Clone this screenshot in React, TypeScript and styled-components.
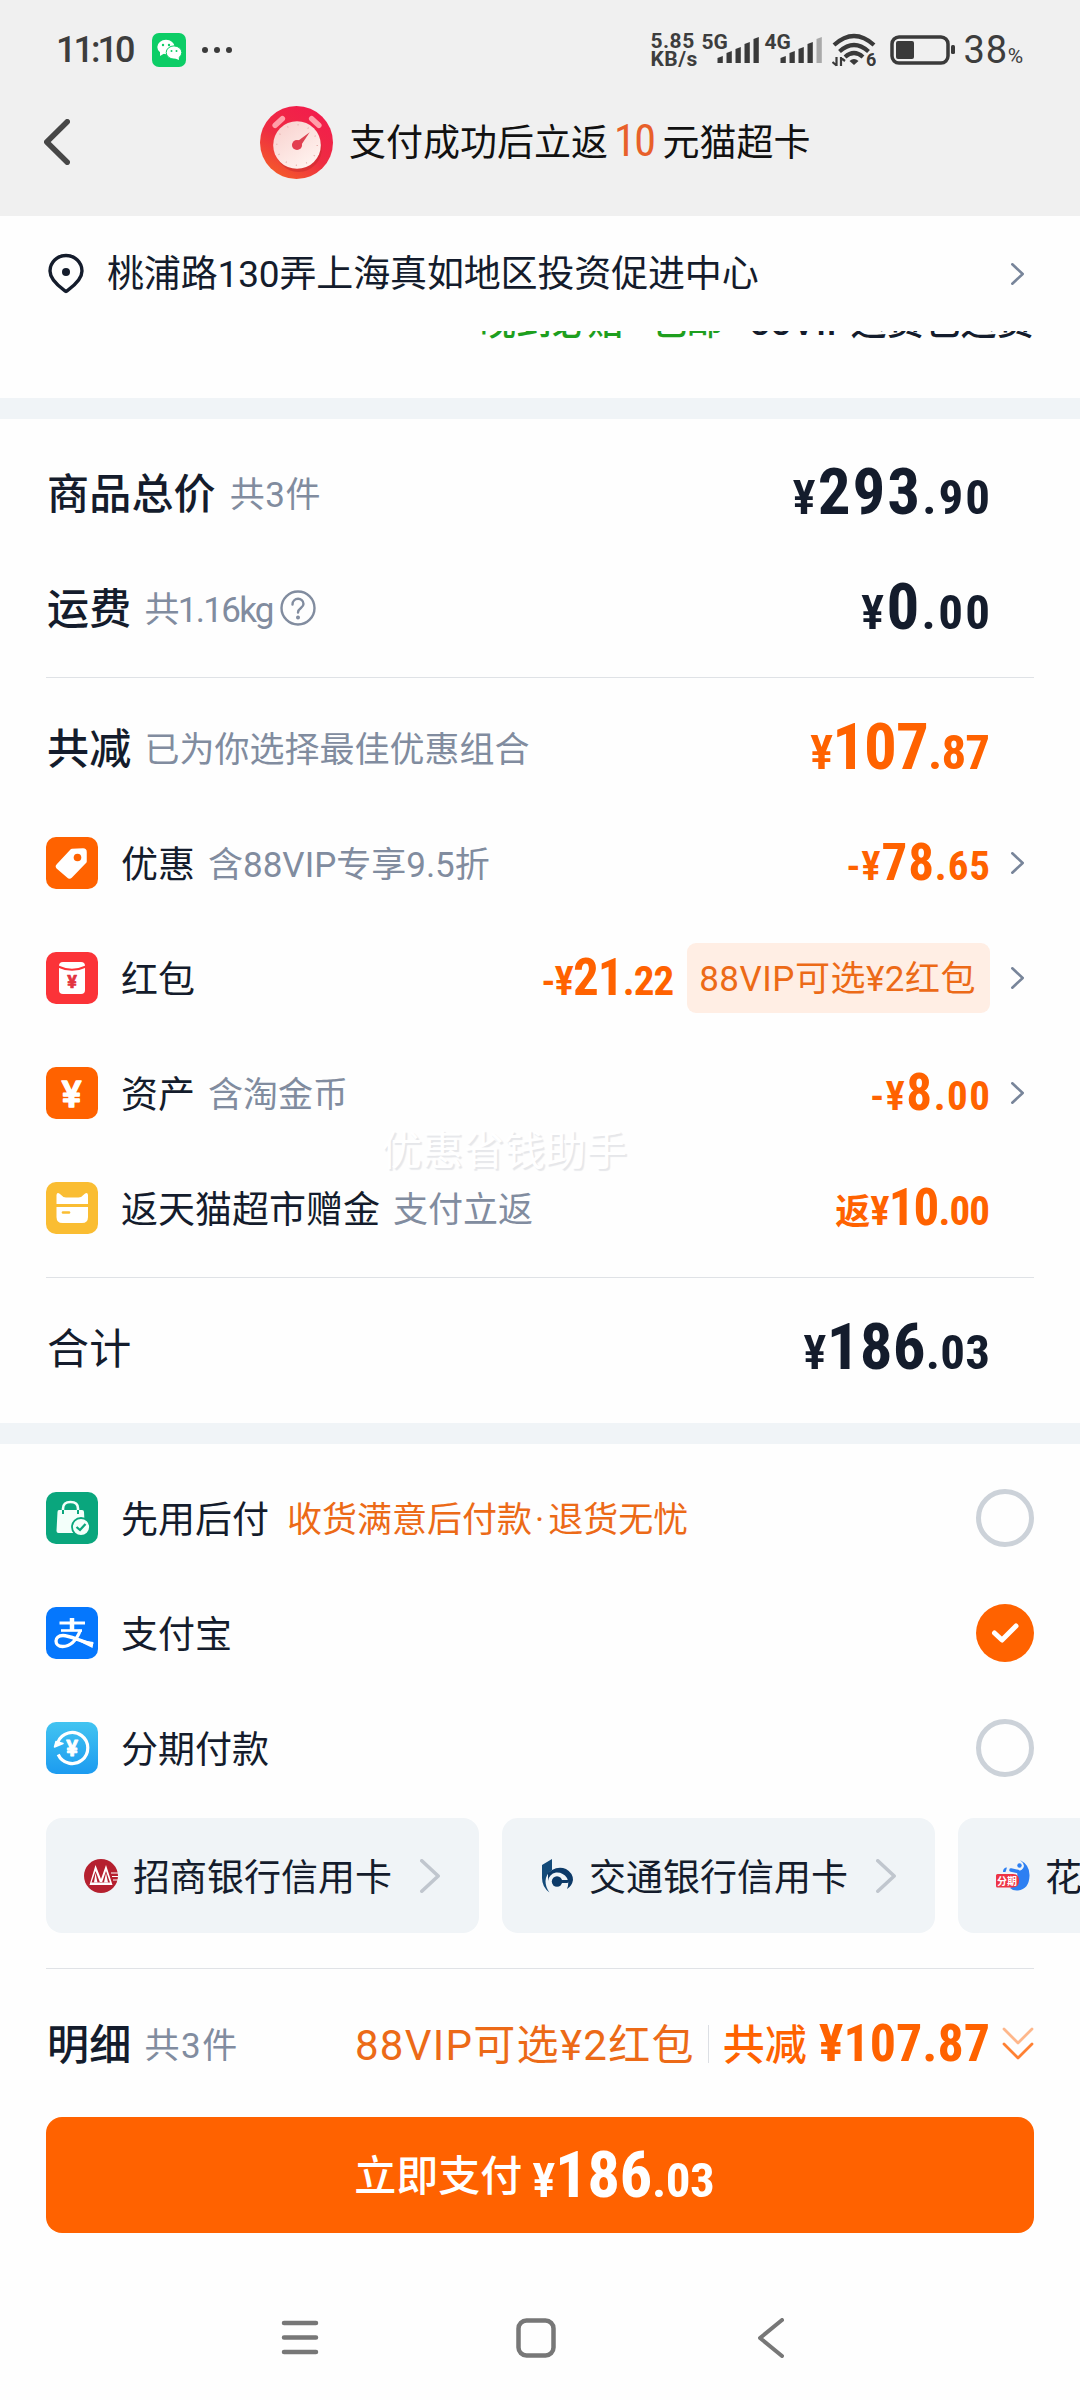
import React from "react";
import styled, { createGlobalStyle } from "styled-components";

const ORANGE = "#ff6200";
const INK = "#141c2c";
const MUTED = "#818c9f";

const GlobalStyle = createGlobalStyle`
  * { box-sizing: border-box; }
  body {
    margin: 0;
    background: #fefefe;
    font-family: Roboto, "Noto Sans CJK SC", sans-serif;
    color: ${INK};
  }
`;

const Page = styled.div`
  width: 1080px;
  height: 2400px;
  overflow: hidden;
  display: flex;
  flex-direction: column;
  background: #fefefe;
  line-height: 1;
  white-space: nowrap;
`;

/* ---------- status bar and header ---------- */

const Top = styled.header`
  height: 216px;
  background: #f0f0f0;
  display: flex;
  flex-direction: column;
`;

const StatusBar = styled.div`
  height: 100px;
  padding: 0 56px 0 56px;
  display: flex;
  align-items: center;
  justify-content: space-between;
  color: #3d3d3d;
`;

const StatusGroup = styled.div`
  display: flex;
  align-items: center;
`;

const Time = styled.span`
  width: 96px;
  font-size: 36px;
  letter-spacing: -3px;
  font-weight: 500;
  font-stretch: 88%;
`;

const Speed = styled.span`
  width: 51px;
  font-size: 21px;
  line-height: 18px;
  letter-spacing: 0.5px;
  font-weight: 700;
  white-space: pre-line;
`;

const Network = styled.div<{ $width: number }>`
  width: ${(p) => p.$width}px;
  height: 34px;
  display: flex;
  align-items: flex-start;
  font-size: 21px;
  line-height: 18px;
  font-weight: 700;
`;

const Bars = styled.svg`
  flex: none;
  margin: 4px 0 0 -11px;
`;

const Percent = styled.span`
  font-size: 38px;
  margin-left: 7px;
  letter-spacing: 0.8px;
  small { font-size: 21px; }
`;

const TitleBar = styled.div`
  height: 84px;
  padding-left: 44px;
  display: flex;
  align-items: center;
`;

const Title = styled.h1`
  margin: 0 0 2px 16px;
  font-size: 37px;
  font-weight: 400;
  color: #111;
  display: flex;
  align-items: baseline;
  em {
    font-style: normal;
    font-size: 44px;
    font-stretch: 75%;
    color: #e8602a;
    margin: 0 8px 0 6px;
    letter-spacing: -1.5px;
  }
`;

const StopwatchIcon = styled.svg`
  margin-left: 190px;
`;

/* ---------- address ---------- */

const AddressRow = styled.div`
  height: 115px;
  padding: 0 56px 0 46px;
  display: flex;
  align-items: center;
`;

const Address = styled.span`
  flex: 1;
  margin-left: 21px;
  padding-top: 2px;
  font-size: 37px;
  letter-spacing: -0.15px;
`;

const ScrolledLine = styled.div`
  height: 67px;
  padding-right: 46px;
  display: flex;
  justify-content: flex-end;
`;

const ScrolledText = styled.div`
  height: 8px;
  overflow: hidden;
  display: flex;
  align-items: flex-end;
  gap: 27px;
  font-size: 36px;
  font-weight: 500;
  line-height: 31px;
  span:nth-child(-n + 2) { color: #1e9f1e; }
  span:last-child { letter-spacing: 0.7px; }
`;

const Band = styled.div`
  height: 21px;
  background: #f0f4f7;
`;

/* ---------- rows ---------- */

const Section = styled.section<{ $top: number; $bottom: number }>`
  padding: ${(p) => p.$top}px 46px ${(p) => p.$bottom}px;
`;

const Row = styled.div`
  height: 115px;
  display: flex;
  align-items: center;
`;

const Divider = styled.hr`
  margin: 12px 0;
  height: 1px;
  border: 0;
  background: #dfe2e6;
`;

const Heading = styled.span<{ $weight?: number }>`
  font-size: 42px;
  letter-spacing: 0.2px;
  font-weight: ${(p) => p.$weight ?? 500};
  margin-left: 1px;
  padding-top: 4px;
`;

const Label = styled.span`
  font-size: 37px;
  margin-left: 23px;
  padding-top: 5px;
`;

const Note = styled.span<{ $gap?: number; $color?: string; $track?: number }>`
  font-size: 35px;
  margin-left: ${(p) => p.$gap ?? 13}px;
  padding-top: 5px;
  letter-spacing: ${(p) => p.$track ?? 0}px;
  color: ${(p) => p.$color ?? MUTED};
`;

const MidDot = styled.span`
  margin: 0 4px 0 3px;
`;

const Trailing = styled.div`
  margin-left: auto;
  display: flex;
  align-items: center;
`;

const ArrowSlot = styled.div<{ $flush?: boolean }>`
  width: 44px;
  display: flex;
  justify-content: flex-end;
  padding-right: ${(p) => (p.$flush ? 0 : 10)}px;
`;

const Amount = styled.span<{ $size: number; $minor: number; $color: string; $track: number }>`
  color: ${(p) => p.$color};
  font-size: ${(p) => p.$size}px;
  font-weight: 700;
  font-stretch: 85%;
  letter-spacing: ${(p) => p.$track}px;
  margin-right: ${(p) => -p.$track}px;
  small { font-size: ${(p) => p.$minor}px; }
  small:first-child { font-weight: 600; }
`;

const Back = styled.small`
  && { font-size: 35px; font-weight: 500; letter-spacing: 0; vertical-align: 1px; }
`;

const Pill = styled.span`
  height: 70px;
  padding: 3px 14px 0 12px;
  margin-left: 13px;
  border-radius: 9px;
  background: #ffeee4;
  color: #ec6a17;
  font-size: 35px;
  letter-spacing: 0.5px;
  display: flex;
  align-items: center;
`;

const Radio = styled.span<{ $on?: boolean }>`
  width: 58px;
  height: 58px;
  border-radius: 50%;
  border: ${(p) => (p.$on ? "0" : "5.5px solid #ccd2d9")};
  background: ${(p) => (p.$on ? ORANGE : "transparent")};
  display: flex;
  align-items: center;
  justify-content: center;
`;

const Watermark = styled.div`
  position: absolute;
  left: 381px;
  top: 1131px;
  font-size: 41px;
  color: #fff;
  text-shadow: 2px 2px 1px #e6e7ea;
`;

/* ---------- bank cards ---------- */

const Chips = styled.div`
  display: flex;
  gap: 23px;
  padding-left: 46px;
  overflow: hidden;
`;

const Chip = styled.div`
  flex: none;
  width: 433px;
  height: 115px;
  padding: 0 39px 0 38px;
  border-radius: 16px;
  background: #f0f4f7;
  display: flex;
  align-items: center;
  font-size: 37px;
  gap: 15px;
  & > svg:last-child { margin-left: auto; }
`;

const BankName = styled.span`
  padding-top: 6px;
`;

/* ---------- footer ---------- */

const Summary = styled.div`
  height: 121px;
  padding-top: 4px;
  display: flex;
  align-items: center;
`;

const Offer = styled.span`
  color: #ec6a17;
  font-size: 42px;
  letter-spacing: 1.3px;
  padding-top: 4px;
`;

const Bar = styled.i`
  width: 1px;
  height: 38px;
  margin: 0 14px 0 13px;
  background: #dcdfe4;
`;

const Saved = styled.span`
  color: ${ORANGE};
  font-size: 42px;
  font-weight: 500;
  margin-right: 12px;
  padding-top: 4px;
`;

const PayButton = styled.button`
  width: 988px;
  height: 116px;
  margin: 15px 46px 0;
  padding: 0 11px 0 0;
  border: 0;
  border-radius: 16px;
  background: ${ORANGE};
  color: #fff;
  font: 500 42px/1 Roboto, "Noto Sans CJK SC", sans-serif;
  display: flex;
  align-items: center;
  justify-content: center;
  gap: 10px;
`;

const PayLabel = styled.span`
  padding-top: 4px;
`;

const NavBar = styled.nav`
  margin-top: 72px;
  height: 66px;
  padding: 0 296px 0 281px;
  display: flex;
  align-items: center;
  justify-content: space-between;
`;

const HomeKey = styled.svg`
  margin-right: 5px;
`;

/* ---------- icons ---------- */

type ChevronProps = { w: number; h: number; color: string; stroke: number; left?: boolean };

function Chevron({ w, h, color, stroke, left }: ChevronProps) {
  const p = stroke / 2;
  const d = left
    ? `M${w - p} ${p}L${p} ${h / 2}L${w - p} ${h - p}`
    : `M${p} ${p}L${w - p} ${h / 2}L${p} ${h - p}`;
  return (
    <svg width={w} height={h} fill="none" stroke={color} strokeWidth={stroke} strokeLinecap="round" strokeLinejoin="round">
      <path d={d} />
    </svg>
  );
}

const Yen = ({ x, y, size, color, weight = 700 }: { x: number; y: number; size: number; color: string; weight?: number }) => (
  <text x={x} y={y} fontSize={size} fontWeight={weight} fill={color} stroke={color} strokeWidth={size / 26} strokeLinejoin="round" textAnchor="middle" fontFamily="Roboto, sans-serif">
    ¥
  </text>
);

function Tile({ color, children }: { color: string; children: React.ReactNode }) {
  return (
    <svg width="52" height="52" viewBox="0 0 52 52">
      <rect width="52" height="52" rx="10" fill={color} />
      {children}
    </svg>
  );
}

const TagIcon = () => (
  <Tile color={ORANGE}>
    <path d="M26 13.5L37 13Q39 13 39 15V24.5L24.5 39.5Q23.5 40.5 22.5 39.500L12 30.500Q11 29.500 12 28.500Z" fill="#fff" stroke="#fff" strokeWidth="3.500" strokeLinejoin="round" />
    <circle cx="31.5" cy="20.500" r="3.800" fill={ORANGE} />
  </Tile>
);

const EnvelopeIcon = () => (
  <Tile color="#fb3338">
    <rect x="13" y="10" width="26" height="32" rx="4" fill="#fff" />
    <path d="M12 14.500Q26 21 40 14.500" fill="none" stroke="#fb3338" strokeWidth="2" />
    <Yen x={26} y={36} size={18} color="#e23440" />
  </Tile>
);

const AssetIcon = () => (
  <Tile color={ORANGE}>
    <Yen x={25.5} y={39.5} size={37} color="#fff" weight={500} />
  </Tile>
);

const CatCardIcon = () => (
  <Tile color="#fabd32">
    <path d="M10.500 22V13Q11 9.500 14 12Q17 15.500 20 15.500H32.500Q35.500 15.500 38.500 12Q41.500 9.500 42 13V22Z" fill="#fff" />
    <path d="M10.500 25H42V35Q42 41 36 41H16.500Q10.500 41 10.500 35Z" fill="#fff" />
    <path d="M17 30.500H23" stroke="#fabd32" strokeWidth="2.600" strokeLinecap="round" />
  </Tile>
);

const BagIcon = () => (
  <Tile color="#0aa67d">
    <path d="M13 18H36Q38 18 38 20L39 39Q39 41 37 41H12.500Q10.500 41 10.500 39L11.500 20Q11.500 18 13 18Z" fill="#f3fffa" />
    <path d="M17 18V16.500Q17 10 24.500 10T32 16.500V18" fill="none" stroke="#f3fffa" strokeWidth="2.600" />
    <path d="M17 18V22M32 18V22" stroke="#0aa67d" strokeWidth="2" />
    <circle cx="35" cy="35" r="9" fill="#f3fffa" stroke="#0aa67d" strokeWidth="1.800" />
    <path d="M30.500 35L34 38L39.500 32" fill="none" stroke="#0aa67d" strokeWidth="2.300" />
  </Tile>
);

const AlipayIcon = () => (
  <Tile color="#0577fd">
    <g fill="none" stroke="#fff">
      <path d="M13.500 16H39" strokeWidth="3" />
      <path d="M26 11V23" strokeWidth="4.500" />
      <path d="M15 23.500H36" strokeWidth="2.600" />
      <path d="M34.500 23C31 32 25 39.500 16.500 39.500C8 39.500 7.500 28.500 17 28.500C24 28.500 31 33 47 37.500" strokeWidth="3.300" />
    </g>
    <path d="M32 31.500Q39 34 47.500 35L46.500 41Q38 37 31 33Z" fill="#fff" />
  </Tile>
);

const InstallmentIcon = () => (
  <Tile color="url(#sky)">
    <defs>
      <linearGradient id="sky" x1="0" y1="0" x2="0" y2="1">
        <stop offset="0" stopColor="#42c4f1" />
        <stop offset="1" stopColor="#1c9bf0" />
      </linearGradient>
    </defs>
    <path d="M12 20A15.500 15.500 0 1 1 12.200 32.500" fill="none" stroke="#fff" strokeWidth="3.200" />
    <path d="M8.500 25L10 19.500L17 21.500Z" fill="#fff" stroke="#fff" strokeWidth="1.500" strokeLinejoin="round" />
    <Yen x={26} y={34} size={22} color="#fff" weight={600} />
  </Tile>
);

const PinIcon = () => (
  <svg width="40" height="42" viewBox="0 0 40 42" fill="none">
    <path d="M20 38.500C17 36 4 28.500 4 18A16 15.500 0 0 1 36 18C36 28.500 23 36 20 38.500Z" stroke={INK} strokeWidth="3.400" strokeLinejoin="round" />
    <circle cx="20" cy="19" r="4" fill={INK} />
  </svg>
);

const Help = styled.svg`
  margin: 0 0 0 7px;
`;

const WechatIcon = () => (
  <svg width="34" height="34" viewBox="0 0 34 34">
    <rect width="34" height="34" rx="7" fill="#0ccd66" />
    <path d="M8 18L8 23L13 20Z" fill="#fff" />
    <ellipse cx="14" cy="14" rx="8.700" ry="7.200" fill="#fff" />
    <ellipse cx="22" cy="19.500" rx="7.800" ry="6.600" fill="#fff" stroke="#0ccd66" strokeWidth="1" />
    <path d="M22 25L27 27L26.500 22Z" fill="#fff" />
    <g fill="#0ccd66">
      <circle cx="11" cy="12" r="1.200" />
      <circle cx="17" cy="12" r="1.200" />
      <circle cx="19.500" cy="18" r="1" />
      <circle cx="24.500" cy="18" r="1" />
    </g>
  </svg>
);

const barHeights = [7, 12, 16, 21, 26];

const Signal = ({ weak }: { weak?: boolean }) => (
  <Bars width="43" height="26">
    {barHeights.map((h, i) => (
      <path key={h} d={`M${i * 9 + 0.5} 26V${28 - h}L${i * 9 + 5.8} ${26 - h}V26Z`} fill={weak && i === 4 ? "#a9a9a9" : "#3a3a3a"} />
    ))}
  </Bars>
);

const WifiIcon = () => (
  <svg width="44" height="34" viewBox="0 0 44 34" fill="none" stroke="#3a3a3a" strokeWidth="4.200">
    <path d="M2 12Q22 -6 42 12" />
    <path d="M7.500 18.500Q22 5.500 36.500 18.500" />
    <path d="M13 24Q22 16 31 24" />
    <path d="M17.500 28Q22 24 26.500 28L22 32Z" fill="#3a3a3a" stroke="none" />
    <path d="M4.500 24V33M0.500 29L4.500 32.500M9 33V24M13 28L9 25" strokeWidth="2.200" />
    <text x="34" y="33" fontSize="18" fontWeight="700" fill="#3a3a3a" stroke="none" fontFamily="Roboto, sans-serif">6</text>
  </svg>
);

const Battery = styled.svg`
  margin-left: 14px;
`;

const CmbLogo = () => (
  <svg width="34" height="34" viewBox="0 0 34 34">
    <circle cx="17" cy="17" r="17" fill="#b5202f" />
    <path d="M11.500 6L17 20L22 6L28.500 26H5.500Z" fill="#fff" />
    <path d="M11.500 12L7.500 23.500H26L22 12L17.800 24H16.200Z" fill="#b5202f" />
    <path d="M11.500 14L13.500 23.500H10Z M22 14L24 23.500H20Z" fill="#fff" />
    <path d="M27 14H34M28 17.500H34M29 21H34" stroke="#fff" strokeWidth="1" />
  </svg>
);

const BocomLogo = () => (
  <svg width="34" height="34" viewBox="0 0 34 34">
    <path d="M2 6L12 0V11Q6 15 5.500 22Q5.500 28 9.500 33.500Q2 28 2 19Z" fill="#134a79" />
    <path d="M12 11Q19 7 26 10Q33 14 33 21Q32 27 27 30Q29.500 24 27 19Q23 13 16 13.500Q9 15 8 22V14Z" fill="#0d3a68" />
    <circle cx="17" cy="22.500" r="5.200" fill="#0d3a68" />
    <path d="M17 21H29Q29 23 27.500 24H17Z" fill="#0d3a68" />
  </svg>
);

const HuabeiLogo = () => (
  <svg width="34" height="34" viewBox="0 0 34 34">
    <path d="M24 1Q34 6 33.500 17Q33 30 22 31.500Q17 32 14 29L22 24L21 12Q27 12 28 7Q27 3 24 1Z" fill="#2d7ff2" />
    <path d="M7 13Q7 8.500 11 8.500L9.500 13Z" fill="#2d7ff2" />
    <path d="M15 11L22 12.500" stroke="#2d7ff2" strokeWidth="3.500" strokeLinecap="round" />
    <circle cx="23.500" cy="6.500" r="2.200" fill="#2d7ff2" />
    <path d="M1.500 15H17Q23 15 23 21.500Q23 28.500 16 28.500H1.500Q0 28.500 0 27V16.500Q0 15 1.500 15Z" fill="#ed3445" />
    <text x="11" y="25.500" fontSize="10" fontWeight="700" textAnchor="middle" fill="#fff" fontFamily="'Noto Sans CJK SC', sans-serif">分期</text>
  </svg>
);

/* ---------- composed rows ---------- */

type PriceProps = { value: string; large?: boolean; color?: string; prefix?: React.ReactNode; track?: number };

function Price({ value, large, color = ORANGE, prefix, track = 0 }: PriceProps) {
  const [whole, cents] = value.split(".");
  return (
    <Amount $size={large ? 65 : 51} $minor={large ? 49 : 41} $color={color} $track={track}>
      <small>{prefix}¥</small>
      {whole}
      <small>.{cents}</small>
    </Amount>
  );
}

type DetailProps = { icon: React.ReactNode; label: string; note?: string; arrow?: boolean; children: React.ReactNode };

const Detail = ({ icon, label, note, arrow, children }: DetailProps) => (
  <Row>
    {icon}
    <Label>{label}</Label>
    {note && <Note>{note}</Note>}
    <Trailing>
      {children}
      <ArrowSlot>{arrow && <Chevron w={13} h={22} color="#78859a" stroke={2.6} />}</ArrowSlot>
    </Trailing>
  </Row>
);

const Check = () => (
  <svg width="30" height="24" viewBox="0 0 30 24" fill="none" stroke="#fff" strokeWidth="5" strokeLinecap="round" strokeLinejoin="round">
    <path d="M4.500 12L12 19L26 5" />
  </svg>
);

export default function App() {
  return (
    <Page>
      <GlobalStyle />
      <Top>
        <StatusBar>
          <StatusGroup>
            <Time>11:10</Time>
            <WechatIcon />
            <svg width="46" height="8">
              {[19, 31, 43].map((x) => <circle key={x} cx={x} cy="4" r="3" fill="#3a3a3a" />)}
            </svg>
          </StatusGroup>
          <StatusGroup>
            <Speed>{"5.85\nKB/s"}</Speed>
            <Network $width={63}>5G<Signal /></Network>
            <Network $width={68}>4G<Signal weak /></Network>
            <WifiIcon />
            <Battery width="66" height="30">
              <rect x="2" y="2" width="56" height="26" rx="7" fill="none" stroke="#3a3a3a" strokeWidth="3.500" />
              <rect x="6" y="6" width="18" height="18" rx="2" fill="#3a3a3a" />
              <rect x="61" y="10" width="4" height="9" rx="1.500" fill="#3a3a3a" />
            </Battery>
            <Percent>38<small>%</small></Percent>
          </StatusGroup>
        </StatusBar>
        <TitleBar>
          <Chevron left w={26} h={46} color="#474747" stroke={5.5} />
          <StopwatchIcon width="73" height="73" viewBox="0 0 72 72">
            <defs>
              <linearGradient id="body" x1="0.800" y1="0" x2="0.200" y2="1">
                <stop offset="0" stopColor="#f31b4d" />
                <stop offset="0.550" stopColor="#ee2c42" />
                <stop offset="1" stopColor="#f55f28" />
              </linearGradient>
              <linearGradient id="face" x1="0" y1="0" x2="0.700" y2="1">
                <stop offset="0" stopColor="#f8cfcc" />
                <stop offset="1" stopColor="#fff3ef" />
              </linearGradient>
            </defs>
            <circle cx="36" cy="36" r="36" fill="url(#body)" />
            <ellipse cx="38" cy="42" rx="23" ry="23" fill="#c52a2c" opacity="0.5" />
            <g stroke="#ff9fa9" strokeWidth="5.500" strokeLinecap="round">
              <path d="M15 19L22 12.500" />
              <path d="M51 12.500L58 19" />
            </g>
            <circle cx="36.500" cy="38.500" r="23.500" fill="url(#face)" />
            <circle cx="36.500" cy="38.500" r="20" fill="none" stroke="#e6b5b0" strokeWidth="1.500" strokeDasharray="1 9.470" />
            <path d="M34 37L49 26L39 41Z" fill="#dc4352" />
            <circle cx="36.500" cy="38.500" r="5" fill="#e33e50" />
          </StopwatchIcon>
          <Title>支付成功后立返<em>10</em>元猫超卡</Title>
        </TitleBar>
      </Top>

      <AddressRow>
        <PinIcon />
        <Address>桃浦路130弄上海真如地区投资促进中心</Address>
        <Chevron w={13} h={22} color="#78859a" stroke={2.6} />
      </AddressRow>
      <ScrolledLine>
        <ScrolledText>
          <span>晚到必赔</span>
          <span>包邮</span>
          <span>88VIP运费包运费</span>
        </ScrolledText>
      </ScrolledLine>
      <Band />

      <Section $top={16} $bottom={18}>
        <Row>
          <Heading>商品总价</Heading>
          <Note $gap={14} $track={0.5}>共3件</Note>
          <Trailing><Price value="293.90" large color={INK} track={2} /><ArrowSlot /></Trailing>
        </Row>
        <Row>
          <Heading>运费</Heading>
          <Note $track={-1.7}>共1.16kg</Note>
          <Help width="36" height="36" viewBox="0 0 36 36" fill="none" stroke={MUTED} strokeWidth="2.400" strokeLinecap="round">
            <circle cx="18" cy="18" r="16.500" />
            <path d="M12.500 14.500C12.500 7 23.500 7 23.500 14C23.500 18 18 18 18 22.500" />
            <circle cx="18" cy="27.500" r="0.800" fill={MUTED} />
          </Help>
          <Trailing><Price value="0.00" large color={INK} track={2.3} /><ArrowSlot /></Trailing>
        </Row>
        <Divider />
        <Row>
          <Heading>共减</Heading>
          <Note>已为你选择最佳优惠组合</Note>
          <Trailing><Price value="107.87" large track={-0.9} /><ArrowSlot /></Trailing>
        </Row>
        <Detail icon={<TagIcon />} label="优惠" note="含88VIP专享9.5折" arrow>
          <Price value="78.65" prefix="-" track={0.9} />
        </Detail>
        <Detail icon={<EnvelopeIcon />} label="红包" arrow>
          <Price value="21.22" prefix="-" track={-0.9} />
          <Pill>88VIP可选¥2红包</Pill>
        </Detail>
        <Detail icon={<AssetIcon />} label="资产" note="含淘金币" arrow>
          <Price value="8.00" prefix="-" track={1.5} />
        </Detail>
        <Detail icon={<CatCardIcon />} label="返天猫超市赠金" note="支付立返">
          <Price value="10.00" prefix={<Back>返</Back>} track={-0.9} />
        </Detail>
        <Divider />
        <Row>
          <Heading $weight={400}>合计</Heading>
          <Trailing><Price value="186.03" large color={INK} track={0.2} /><ArrowSlot /></Trailing>
        </Row>
      </Section>
      <Watermark>优惠省钱助手</Watermark>
      <Band />

      <Section $top={16} $bottom={13}>
        <Row>
          <BagIcon />
          <Label>先用后付</Label>
          <Note $gap={18} $color="#ec6a17">收货满意后付款<MidDot>·</MidDot>退货无忧</Note>
          <Trailing><Radio /></Trailing>
        </Row>
        <Row>
          <AlipayIcon />
          <Label>支付宝</Label>
          <Trailing><Radio $on><Check /></Radio></Trailing>
        </Row>
        <Row>
          <InstallmentIcon />
          <Label>分期付款</Label>
          <Trailing><Radio /></Trailing>
        </Row>
      </Section>

      <Chips>
        <Chip><CmbLogo /><BankName>招商银行信用卡</BankName><Chevron w={20} h={34} color="#c0c6ce" stroke={3.6} /></Chip>
        <Chip><BocomLogo /><BankName>交通银行信用卡</BankName><Chevron w={20} h={34} color="#c0c6ce" stroke={3.6} /></Chip>
        <Chip><HuabeiLogo /><BankName>花呗分期</BankName><Chevron w={20} h={34} color="#c0c6ce" stroke={3.6} /></Chip>
      </Chips>

      <Section $top={23} $bottom={0}>
        <Divider />
        <Summary>
          <Heading>明细</Heading>
          <Note $track={1.6}>共3件</Note>
          <Trailing>
            <Offer>88VIP可选¥2红包</Offer>
            <Bar />
            <Saved>共减</Saved>
            <Amount $size={52} $minor={52} $color={ORANGE} $track={0}>¥107.87</Amount>
            <ArrowSlot $flush>
              <svg width="32" height="36" viewBox="0 0 32 36" fill="none" stroke={ORANGE} strokeWidth="2.800" strokeLinecap="round" strokeLinejoin="round">
                <path d="M2 3L16 17L30 3" opacity="0.450" />
                <path d="M2 18L16 32L30 18" opacity="0.800" />
              </svg>
            </ArrowSlot>
          </Trailing>
        </Summary>
      </Section>
      <PayButton>
        <PayLabel>立即支付</PayLabel>
        <Price value="186.03" large color="#fff" track={-0.5} />
      </PayButton>

      <NavBar>
        <svg width="38" height="38" stroke="#777" strokeWidth="4.500" strokeLinecap="round">
          <path d="M3 4H35M3 18.500H35M3 33H35" />
        </svg>
        <HomeKey width="40" height="40" fill="none" stroke="#777" strokeWidth="4.500">
          <rect x="2.500" y="2.500" width="35" height="35" rx="8" />
        </HomeKey>
        <Chevron left w={26} h={40} color="#777" stroke={4} />
      </NavBar>
    </Page>
  );
}
